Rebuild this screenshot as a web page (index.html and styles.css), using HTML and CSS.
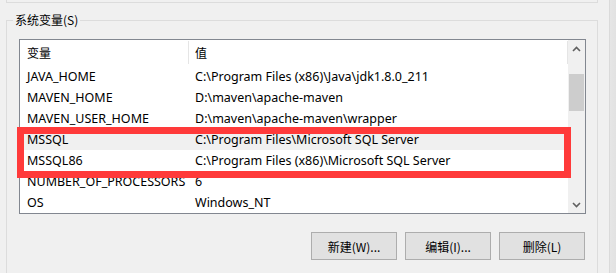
FILE: index.html
```html
<!DOCTYPE html>
<html lang="zh-CN">
<head>
  <meta charset="UTF-8">
  <title>环境变量</title>
  <link rel="stylesheet" href="styles.css">
</head>
<body>
  <div class="page">
    <div class="main">
      <div class="prev-group"></div>

      <fieldset class="group">
        <legend>系统变量(S)</legend>

        <div class="list">
          <div class="list-body">
            <div class="head">
              <div class="cell name">变量</div>
              <div class="cell value">值</div>
            </div>
            <div class="row"><div class="cell name">JAVA_HOME</div><div class="cell value">C:\Program Files (x86)\Java\jdk1.8.0_211</div></div>
            <div class="row"><div class="cell name">MAVEN_HOME</div><div class="cell value">D:\maven\apache-maven</div></div>
            <div class="row"><div class="cell name">MAVEN_USER_HOME</div><div class="cell value">D:\maven\apache-maven\wrapper</div></div>
            <div class="row hot"><div class="cell name">MSSQL</div><div class="cell value">C:\Program Files\Microsoft SQL Server</div></div>
            <div class="row"><div class="cell name">MSSQL86</div><div class="cell value">C:\Program Files (x86)\Microsoft SQL Server</div></div>
            <div class="row"><div class="cell name">NUMBER_OF_PROCESSORS</div><div class="cell value">6</div></div>
            <div class="row"><div class="cell name">OS</div><div class="cell value">Windows_NT</div></div>
          </div>

          <div class="scrollbar">
            <div class="arrow">
              <svg width="9" height="6" viewBox="0 0 9 6"><path d="M1 5 L4.5 1.5 L8 5" fill="none" stroke="#606060" stroke-width="1.6"/></svg>
            </div>
            <div class="track"><div class="thumb"></div></div>
            <div class="arrow">
              <svg width="9" height="6" viewBox="0 0 9 6"><path d="M1 1 L4.5 4.5 L8 1" fill="none" stroke="#606060" stroke-width="1.6"/></svg>
            </div>
          </div>

          <!-- annotation box -->
          <div class="mark"></div>
        </div>

        <div class="buttons">
          <button class="btn">新建(W)...</button>
          <button class="btn">编辑(I)...</button>
          <button class="btn">删除(L)</button>
        </div>
      </fieldset>
    </div>
    <div class="edge"></div>
  </div>
</body>
</html>
```

FILE: styles.css
```css
html, body {
  margin: 0;
  height: 273px;
  overflow: hidden;
}

body {
  background: #f0f0f0;
  font-family: "Noto Sans", "Noto Sans CJK SC", sans-serif;
  font-size: 12.5px;
  color: #000;
}

.page {
  display: flex;
  height: 273px;
}

.main {
  width: 610px;
}

.edge {
  width: 6px;
  border-left: 1px solid #dadada;
  background: linear-gradient(to right, #e6e6e6, #e2e2e2);
}

.prev-group {
  box-sizing: border-box;
  margin-left: 6px;
  width: 592px;
  height: 3px;
  border: 1px solid #dcdcdc;
  border-top: none;
}

/* the group runs on past the bottom of the window */
.group {
  box-sizing: border-box;
  margin: 9px 0 0 6px;
  width: 592px;
  padding: 11px 11px 13px 12px;
  border: 1px solid #dcdcdc;
  border-bottom: none;
  min-inline-size: 0;
}

.group legend {
  margin-left: -6px;
  padding: 0 2px;
  line-height: 16px;
  font-size: 12px;
  font-family: "Noto Sans CJK SC", sans-serif;
}

.list {
  position: relative;
  display: flex;
  height: 175px;
  box-sizing: border-box;
  border: 1px solid #828790;
  background: #fff;
}

.list-body {
  flex: 1;
  overflow: hidden;
}

.head, .row {
  display: grid;
  grid-template-columns: 169px 1fr;
}

.head {
  height: 26px;
  line-height: 24px;
  font-size: 12px;
  font-family: "Noto Sans CJK SC", sans-serif;
}

.head .cell {
  margin-top: 1px;
  height: 23px;
  border-right: 1px solid #e5e5e5;
}

.row {
  height: 21px;
  line-height: 21px;
}

.row.hot {
  background: #f0f0f0;
}

.cell {
  white-space: nowrap;
  overflow: hidden;
}

.cell.name {
  padding-left: 7px;
}

.cell.value {
  padding-left: 6px;
}

.scrollbar {
  width: 17px;
  display: flex;
  flex-direction: column;
  background: #f0f0f0;
}

.arrow {
  height: 17px;
  display: flex;
  align-items: center;
  justify-content: center;
}

.track {
  flex: 1;
  padding: 17px 1px 0;
}

.thumb {
  height: 37px;
  background: #cdcdcd;
}

.mark {
  position: absolute;
  left: -3px;
  top: 87px;
  width: 554px;
  height: 51px;
  box-sizing: border-box;
  border: 7px solid #ff3a3a;
}

.buttons {
  display: flex;
  justify-content: flex-end;
  gap: 8px;
  margin: 18px 1px 0 0;
}

.btn {
  width: 86px;
  height: 28px;
  padding: 0;
  background: #e1e1e1;
  border: 1px solid #adadad;
  font-family: "Noto Sans CJK SC", sans-serif;
  font-size: 12px;
  color: #000;
}
```
